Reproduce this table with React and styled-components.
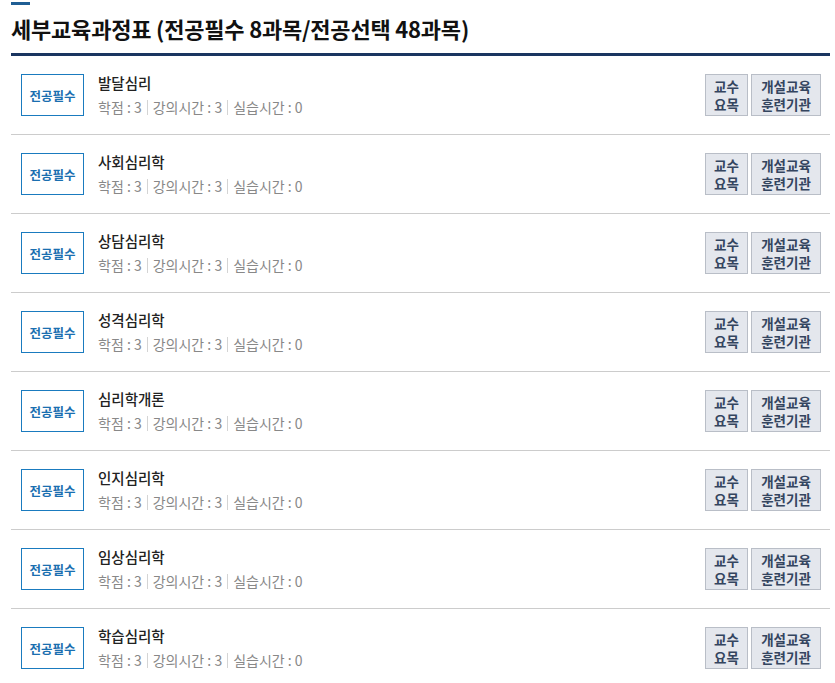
import React from "react";
import styled, { createGlobalStyle } from "styled-components";

const Global = createGlobalStyle`
  html, body { margin: 0; padding: 0; background: #fff; }
  body { font-family: "Noto Sans CJK KR", "Noto Sans", sans-serif; }
`;

const Page = styled.div`
  padding: 2px 5px 0 11px;
`;

const Accent = styled.div`
  width: 19px;
  height: 3px;
  background: #1f5e94;
`;

const Title = styled.h2`
  margin: 0;
  padding: 9px 0 10px;
  font-size: 22px;
  line-height: 29px;
  font-weight: 700;
  color: #111;
  letter-spacing: -0.2px;
  border-bottom: 3px solid #1a3560;
`;

const List = styled.ul`
  list-style: none;
  margin: 0;
  padding: 0;
`;

const Row = styled.li`
  display: flex;
  align-items: flex-start;
  padding: 18px 9px 18px 10px;
  border-bottom: 1px solid #cccccc;
`;

const Badge = styled.div`
  box-sizing: border-box;
  width: 63px;
  height: 42px;
  border: 1px solid #1a7bbf;
  display: flex;
  align-items: center;
  justify-content: center;
  color: #1a6fb0;
  font-size: 12.5px;
  font-weight: 700;
  flex-shrink: 0;
`;

const Info = styled.div`
  flex: 1;
  height: 42px;
  padding-left: 14px;
  display: flex;
  flex-direction: column;
`;

const Name = styled.div`
  font-size: 14.5px;
  font-weight: 500;
  color: #222;
  line-height: 18px;
`;

const Meta = styled.div`
  display: flex;
  align-items: center;
  margin-top: 6px;
  font-size: 14px;
  color: #888;
  line-height: 18px;
`;

const Sep = styled.span`
  display: inline-block;
  width: 1px;
  height: 15px;
  background: #d4d4d4;
  margin: 0 5px;
`;

const Buttons = styled.div`
  display: flex;
  gap: 3px;
`;

const Btn = styled.button`
  box-sizing: border-box;
  width: ${(p) => p.$w}px;
  height: 42px;
  padding: 0;
  background: #e4e7ed;
  border: 1px solid #b9bec7;
  color: #34455f;
  font-family: inherit;
  font-size: 13.5px;
  font-weight: 700;
  line-height: 18px;
  white-space: pre-line;
  text-align: center;
  cursor: pointer;
`;

const courses = [
  "발달심리",
  "사회심리학",
  "상담심리학",
  "성격심리학",
  "심리학개론",
  "인지심리학",
  "임상심리학",
  "학습심리학",
];

export default function App() {
  return (
    <Page>
      <Global />
      <Accent />
      <Title>세부교육과정표 (전공필수 8과목/전공선택 48과목)</Title>
      <List>
        {courses.map((c) => (
          <Row key={c}>
            <Badge>전공필수</Badge>
            <Info>
              <Name>{c}</Name>
              <Meta>
                학점 : 3<Sep />강의시간 : 3<Sep />실습시간 : 0
              </Meta>
            </Info>
            <Buttons>
              <Btn $w={43}>{"교수\n요목"}</Btn>
              <Btn $w={70}>{"개설교육\n훈련기관"}</Btn>
            </Buttons>
          </Row>
        ))}
      </List>
    </Page>
  );
}
